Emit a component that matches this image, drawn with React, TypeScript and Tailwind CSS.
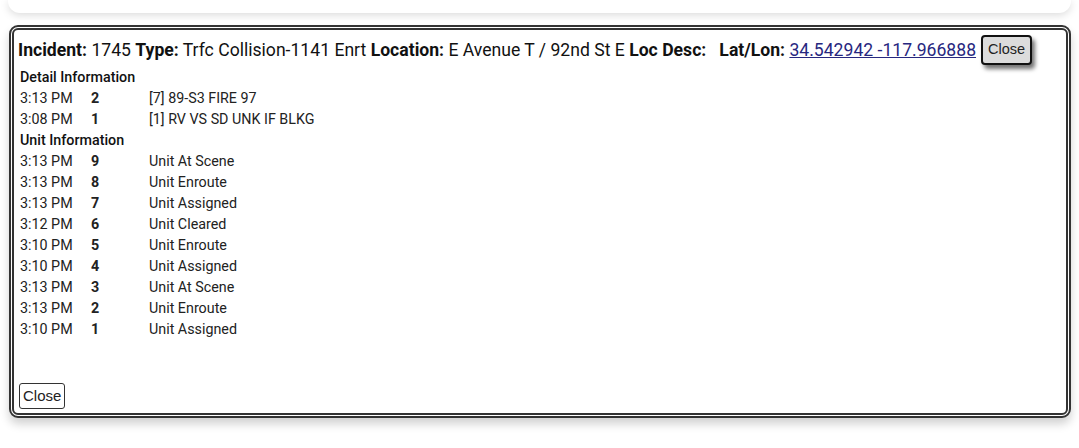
const details = [
  { time: '3:13 PM', seq: 2, text: '[7] 89-S3 FIRE 97' },
  { time: '3:08 PM', seq: 1, text: '[1] RV VS SD UNK IF BLKG' },
];

const units = [
  { time: '3:13 PM', seq: 9, text: 'Unit At Scene' },
  { time: '3:13 PM', seq: 8, text: 'Unit Enroute' },
  { time: '3:13 PM', seq: 7, text: 'Unit Assigned' },
  { time: '3:12 PM', seq: 6, text: 'Unit Cleared' },
  { time: '3:10 PM', seq: 5, text: 'Unit Enroute' },
  { time: '3:10 PM', seq: 4, text: 'Unit Assigned' },
  { time: '3:13 PM', seq: 3, text: 'Unit At Scene' },
  { time: '3:13 PM', seq: 2, text: 'Unit Enroute' },
  { time: '3:10 PM', seq: 1, text: 'Unit Assigned' },
];

type Row = { time: string; seq: number; text: string };

function LogRows({ rows }: { rows: Row[] }) {
  return (
    <>
      {rows.map((r, i) => (
        <div key={i} className="grid grid-cols-[71px_58px_1fr] h-[21px] items-center text-[14.3px] text-[#222]">
          <span>{r.time}</span>
          <span className="font-bold">{r.seq}</span>
          <span>{r.text}</span>
        </div>
      ))}
    </>
  );
}

export default function App() {
  return (
    <div className="w-[1079px] h-[448px] bg-white overflow-hidden" style={{ fontFamily: 'Roboto, "Liberation Sans", sans-serif' }}>
      {/* search card peeking from the top */}
      <div className="mx-2 h-[13px] bg-white rounded-b-xl shadow-[0_2px_8px_rgba(0,0,0,0.15)]" />

      <div className="mt-[12px] ml-[9px] mr-[8px] h-[393px] flex flex-col bg-white border-[5px] border-double border-[#333] rounded-[9px] shadow-[0_6px_10px_rgba(0,0,0,0.18)] pl-[4px] pr-[4px]">
        <div className="flex items-center h-[30px] mt-[5px] text-[17.6px] text-[#111] whitespace-nowrap">
          <span>
            <b className="font-bold">Incident:</b> 1745 <b className="font-bold">Type:</b> Trfc Collision-1141 Enrt{' '}
            <b className="font-bold">Location:</b> E Avenue T / 92nd St E <b className="font-bold">Loc Desc:</b>
            {'\u00a0\u00a0 '}
            <b className="font-bold">Lat/Lon:</b>{' '}
            <a href="#" className="text-[#27277f] underline">34.542942 -117.966888</a>
          </span>
          <button
            className="ml-[5px] h-[30px] px-[5px] bg-[#dcdcdc] border-2 border-[#111] rounded-[4px] text-[14.5px] text-[#222] shadow-[3px_4px_4px_rgba(0,0,0,0.55)]"
            style={{ fontFamily: '"Liberation Sans", Arial, sans-serif' }}
          >
            Close
          </button>
        </div>

        <div className="pl-[2px] mt-[2px]">
          <div className="h-[21px] flex items-center text-[14.3px] font-medium text-[#111]">Detail Information</div>
          <LogRows rows={details} />
          <div className="h-[21px] flex items-center text-[14.3px] font-medium text-[#111]">Unit Information</div>
          <LogRows rows={units} />
        </div>

        <button
          className="mt-auto mb-[4px] ml-[1px] self-start h-[26px] px-[3px] bg-white border border-[#333] rounded-[3px] text-[15px] text-[#222]"
          style={{ fontFamily: '"Liberation Sans", Arial, sans-serif' }}
        >
          Close
        </button>
      </div>
    </div>
  );
}
